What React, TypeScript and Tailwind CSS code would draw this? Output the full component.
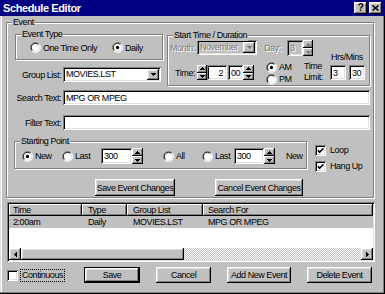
import React from "react";

const raised =
  "shadow-[inset_-1px_-1px_0_#000,inset_1px_1px_0_#fff,inset_-2px_-2px_0_#808080,inset_2px_2px_0_#dfdfdf]";
const raisedSmall = "shadow-[inset_-1px_-1px_0_#000,inset_1px_1px_0_#fff,inset_-2px_-2px_0_#808080]";
const sunken =
  "shadow-[inset_1px_1px_0_#808080,inset_-1px_-1px_0_#fff,inset_2px_2px_0_#000,inset_-2px_-2px_0_#dfdfdf]";
const etched = "border border-[#808080] shadow-[inset_1px_1px_0_#fff,1px_1px_0_#fff]";
const dim = "text-[#808080] [text-shadow:1px_1px_0_#fff]";

function Group({ label, className = "", children }: { label: string; className?: string; children?: React.ReactNode }) {
  return (
    <div className={`relative shrink-0 ${etched} ${className}`}>
      <span className="absolute left-[5px] top-[-7px] bg-[#c0c0c0] px-[1px] leading-[12px]">{label}</span>
      {children}
    </div>
  );
}

function Radio({ checked = false }: { checked?: boolean }) {
  return (
    <svg width="11" height="11" viewBox="0 0 12 12" className="shrink-0">
      <circle cx="6" cy="6" r="5" fill="#fff" />
      <path d="M2.1 9.9A5.5 5.5 0 0 1 9.9 2.1" stroke="#808080" fill="none" />
      <path d="M9.9 2.1A5.5 5.5 0 0 1 2.1 9.9" stroke="#fff" fill="none" />
      <path d="M2.8 9.2A4.5 4.5 0 0 1 9.2 2.8" stroke="#000" fill="none" />
      <path d="M9.2 2.8A4.5 4.5 0 0 1 2.8 9.2" stroke="#dfdfdf" fill="none" />
      {checked && <circle cx="6" cy="6" r="1.8" fill="#000" />}
    </svg>
  );
}

function Check({ checked = false }: { checked?: boolean }) {
  return (
    <span className={`inline-flex h-[11px] w-[11px] shrink-0 items-center justify-center bg-white ${sunken}`}>
      {checked && (
        <svg width="7" height="7" viewBox="0 0 7 7">
          <polyline points="0.8,3.2 2.6,5.2 6.4,1.2" stroke="#000" strokeWidth="1.6" fill="none" />
        </svg>
      )}
    </span>
  );
}

function Tri({ dir, color = "#000" }: { dir: "up" | "down" | "left" | "right"; color?: string }) {
  const d = {
    up: "M2 0h1v1h1v1h1v1H0V2h1V1h1z",
    down: "M0 0h5v1H4v1H3v1H2V2H1V1H0z",
    left: "M2 0h1v5H2V4H1V3H0V2h1V1h1z",
    right: "M0 0h1v1h1v1h1v1H2v1H1v1H0z",
  }[dir];
  const flat = dir === "up" || dir === "down";
  return (
    <svg width={flat ? 5 : 3} height={flat ? 3 : 5} viewBox={flat ? "0 0 5 3" : "0 0 3 5"} className="shrink-0">
      <path d={d} fill={color} />
    </svg>
  );
}

function Spin({ className = "", disabled = false }: { className?: string; disabled?: boolean }) {
  const c = disabled ? "#808080" : "#000";
  return (
    <div className={`flex shrink-0 flex-col ${className}`}>
      <div className={`flex flex-1 items-center justify-center bg-[#c0c0c0] ${raisedSmall}`}>
        <Tri dir="up" color={c} />
      </div>
      <div className={`flex flex-1 items-center justify-center bg-[#c0c0c0] ${raisedSmall}`}>
        <Tri dir="down" color={c} />
      </div>
    </div>
  );
}

function Field({ className = "", children, disabled = false }: { className?: string; children?: React.ReactNode; disabled?: boolean }) {
  return (
    <div
      className={`flex shrink-0 items-center overflow-hidden pl-[3px] ${disabled ? `bg-[#c0c0c0] ${dim}` : "bg-white"} ${sunken} ${className}`}
    >
      {children}
    </div>
  );
}

function Combo({ className = "", value, disabled = false }: { className?: string; value: string; disabled?: boolean }) {
  return (
    <div className={`flex shrink-0 items-stretch p-[2px] ${disabled ? "bg-[#c0c0c0]" : "bg-white"} ${sunken} ${className}`}>
      <span className={`min-w-0 flex-1 overflow-visible pl-[1px] leading-[11px] ${disabled ? dim : ""}`}>{value}</span>
      <span className={`flex w-[12px] shrink-0 items-center justify-center bg-[#c0c0c0] ${raised}`}>
        <Tri dir="down" color={disabled ? "#808080" : "#000"} />
      </span>
    </div>
  );
}

function Btn({ className = "", children, dflt = false }: { className?: string; children: React.ReactNode; dflt?: boolean }) {
  return (
    <div
      className={`flex shrink-0 items-center justify-center bg-[#c0c0c0] ${dflt ? "border border-black" : ""} ${raised} ${className}`}
    >
      {children}
    </div>
  );
}

function Opt({ label, checked = false, className = "" }: { label: string; checked?: boolean; className?: string }) {
  return (
    <div className={`flex shrink-0 items-center gap-[2px] ${className}`}>
      <Radio checked={checked} />
      <span>{label}</span>
    </div>
  );
}

export default function App() {
  return (
    <div className="flex h-[294px] w-[385px] flex-col overflow-hidden whitespace-nowrap bg-[#c0c0c0] text-[9px] leading-[12px] tracking-[-0.45px] text-black [font-family:'Liberation_Sans',Arial,sans-serif] shadow-[inset_-1px_-1px_0_#000,inset_-2px_-2px_0_#808080,inset_1px_0_0_#dfdfdf,inset_2px_0_0_#fff]">
      {/* title bar */}
      <div className="flex h-[16px] shrink-0 items-center justify-between bg-[#000080] pl-[3px] pr-[3px]">
        <span className="text-[11px] font-bold tracking-[-0.4px] text-white">Schedule Editor</span>
        <div className="flex gap-[2px]">
          <div className={`flex h-[12px] w-[13px] items-center justify-center bg-[#c0c0c0] text-[10px] font-bold ${raised}`}>?</div>
          <div className={`flex h-[12px] w-[13px] items-center justify-center bg-[#c0c0c0] ${raised}`}>
            <svg width="7" height="6" viewBox="0 0 7 6">
              <path d="M0.5 0.5L6.5 5.5M6.5 0.5L0.5 5.5" stroke="#000" strokeWidth="1.5" />
            </svg>
          </div>
        </div>
      </div>

      {/* Event group */}
      <Group label="Event" className="ml-[6px] mt-[6px] flex h-[176px] w-[368px] flex-col">
        <div className="flex items-start pl-[8px] pt-[11px]">
          <div className="flex w-[148px] shrink-0 flex-col">
            <Group label="Event Type" className="flex h-[26px] w-[148px] items-center pl-[14px] pt-[1px]">
              <Opt label="One Time Only" className="w-[82px]" />
              <Opt label="Daily" checked />
            </Group>
            <div className="mt-[7px] flex h-[15px] items-center">
              <span className="w-[46px] text-right">Group List:</span>
              <Combo className="ml-[2px] h-[15px] w-[98px]" value="MOVIES.LST" />
            </div>
          </div>

          <Group label="Start Time / Duration" className="ml-[4px] mt-[1px] flex h-[51px] w-[203px] pl-[2px]">
            <div className="flex w-[160px] flex-col pt-[4px]">
              <div className="flex h-[23px] items-start">
                <span className={`mt-[2px] w-[27px] ${dim}`}>Month:</span>
                <Combo className="h-[15px] w-[60px]" value="November" disabled />
                <span className={`ml-[7px] mt-[2px] w-[23px] ${dim}`}>Day:</span>
                <Field className="h-[16px] w-[16px]" disabled>
                  3
                </Field>
                <Spin className="h-[16px] w-[10px]" disabled />
              </div>
              <div className="flex items-start">
                <div className="mt-[4px] flex h-[15px] items-center">
                  <span className="w-[25px] text-right">Time:</span>
                  <Spin className="ml-[2px] h-[15px] w-[10px]" />
                  <Field className="h-[15px] w-[20px] justify-end pr-[4px]">2</Field>
                  <Field className="ml-[1px] h-[15px] w-[15px] pl-[2px]">00</Field>
                  <Spin className="h-[15px] w-[11px]" />
                </div>
                <div className="ml-[12px] flex w-[38px] flex-col">
                  <Opt label="AM" checked />
                  <Opt label="PM" />
                </div>
                <div className="flex w-[26px] flex-col leading-[11px]">
                  <span>Time</span>
                  <span>Limit:</span>
                </div>
              </div>
            </div>
            <div className="flex flex-col pt-[16px]">
              <span className="ml-[1px] leading-[11px]">Hrs/Mins</span>
              <div className="mt-[2px] flex">
                <Field className="h-[15px] w-[16px]">3</Field>
                <Field className="ml-[3px] h-[15px] w-[16px] pl-[2px]">30</Field>
              </div>
            </div>
          </Group>
        </div>

        <div className="mt-[4px] flex h-[15px] items-center">
          <span className="w-[54px] text-right">Search Text:</span>
          <Field className="ml-[2px] h-[15px] w-[307px]">MPG OR MPEG</Field>
        </div>
        <div className="mt-[10px] flex h-[15px] items-center">
          <span className="w-[54px] text-right">Filter Text:</span>
          <Field className="ml-[2px] h-[15px] w-[307px]" />
        </div>

        <div className="mt-[11px] flex items-start">
          <Group label="Starting Point" className="ml-[7px] flex h-[28px] w-[293px] items-center pl-[7px] pt-[2px]">
            <Opt label="New" checked className="w-[40px]" />
            <Opt label="Last" className="w-[39px]" />
            <Field className="h-[16px] w-[31px]">300</Field>
            <Spin className="h-[16px] w-[11px]" />
            <Opt label="All" className="ml-[20px] w-[39px]" />
            <Opt label="Last" className="w-[32px]" />
            <Field className="h-[16px] w-[30px]">300</Field>
            <Spin className="h-[16px] w-[11px]" />
            <span className="ml-[11px]">New</span>
          </Group>
          <div className="ml-[8px] mt-[3px] flex flex-col gap-[4px]">
            <div className="flex items-center gap-[4px]">
              <Check checked />
              <span>Loop</span>
            </div>
            <div className="flex items-center gap-[4px]">
              <Check checked />
              <span>Hang Up</span>
            </div>
          </div>
        </div>

        <div className="ml-[88px] mt-[7px] flex gap-[40px]">
          <Btn className="h-[17px] w-[80px]">Save Event Changes</Btn>
          <Btn className="h-[17px] w-[88px]">Cancel Event Changes</Btn>
        </div>
      </Group>

      {/* event list */}
      <div className={`ml-[7px] mt-[4px] flex h-[60px] w-[368px] shrink-0 flex-col bg-white p-[2px] ${sunken}`}>
        <div className="flex h-[12px] shrink-0">
          <div className={`w-[73px] bg-[#c0c0c0] pl-[4px] ${raisedSmall}`}>Time</div>
          <div className={`w-[45px] bg-[#c0c0c0] pl-[6px] ${raisedSmall}`}>Type</div>
          <div className={`w-[76px] bg-[#c0c0c0] pl-[6px] ${raisedSmall}`}>Group List</div>
          <div className={`flex-1 bg-[#c0c0c0] pl-[5px] ${raisedSmall}`}>Search For</div>
        </div>
        <div className="flex h-[12px] shrink-0 items-center bg-[#c0c0c0]">
          <span className="w-[73px] pl-[4px]">2:00am</span>
          <span className="w-[45px] pl-[6px]">Daily</span>
          <span className="w-[76px] pl-[6px]">MOVIES.LST</span>
          <span className="pl-[5px]">MPG OR MPEG</span>
        </div>
        <div className="flex-1" />
        <div className="flex h-[12px] shrink-0">
          <div className={`flex w-[12px] items-center justify-center bg-[#c0c0c0] ${raised}`}>
            <Tri dir="left" />
          </div>
          <div className={`w-[163px] bg-[#c0c0c0] ${raised}`} />
          <div className="flex-1 bg-[repeating-conic-gradient(#c0c0c0_0%_25%,#ffffff_0%_50%)] bg-[length:2px_2px]" />
          <div className={`flex w-[12px] items-center justify-center bg-[#c0c0c0] ${raised}`}>
            <Tri dir="right" />
          </div>
        </div>
      </div>

      {/* bottom buttons */}
      <div className="ml-[7px] mt-[5px] flex h-[16px] items-center">
        <Check />
        <span className="ml-[2px] border border-dotted border-black px-[1px] leading-[11px]">Continuous</span>
        <Btn className="ml-[19px] h-[16px] w-[56px]" dflt>
          Save
        </Btn>
        <Btn className="ml-[16px] h-[16px] w-[55px]">Cancel</Btn>
        <Btn className="ml-[16px] h-[16px] w-[64px]">Add New Event</Btn>
        <Btn className="ml-[16px] h-[16px] w-[65px]">Delete Event</Btn>
      </div>
    </div>
  );
}
